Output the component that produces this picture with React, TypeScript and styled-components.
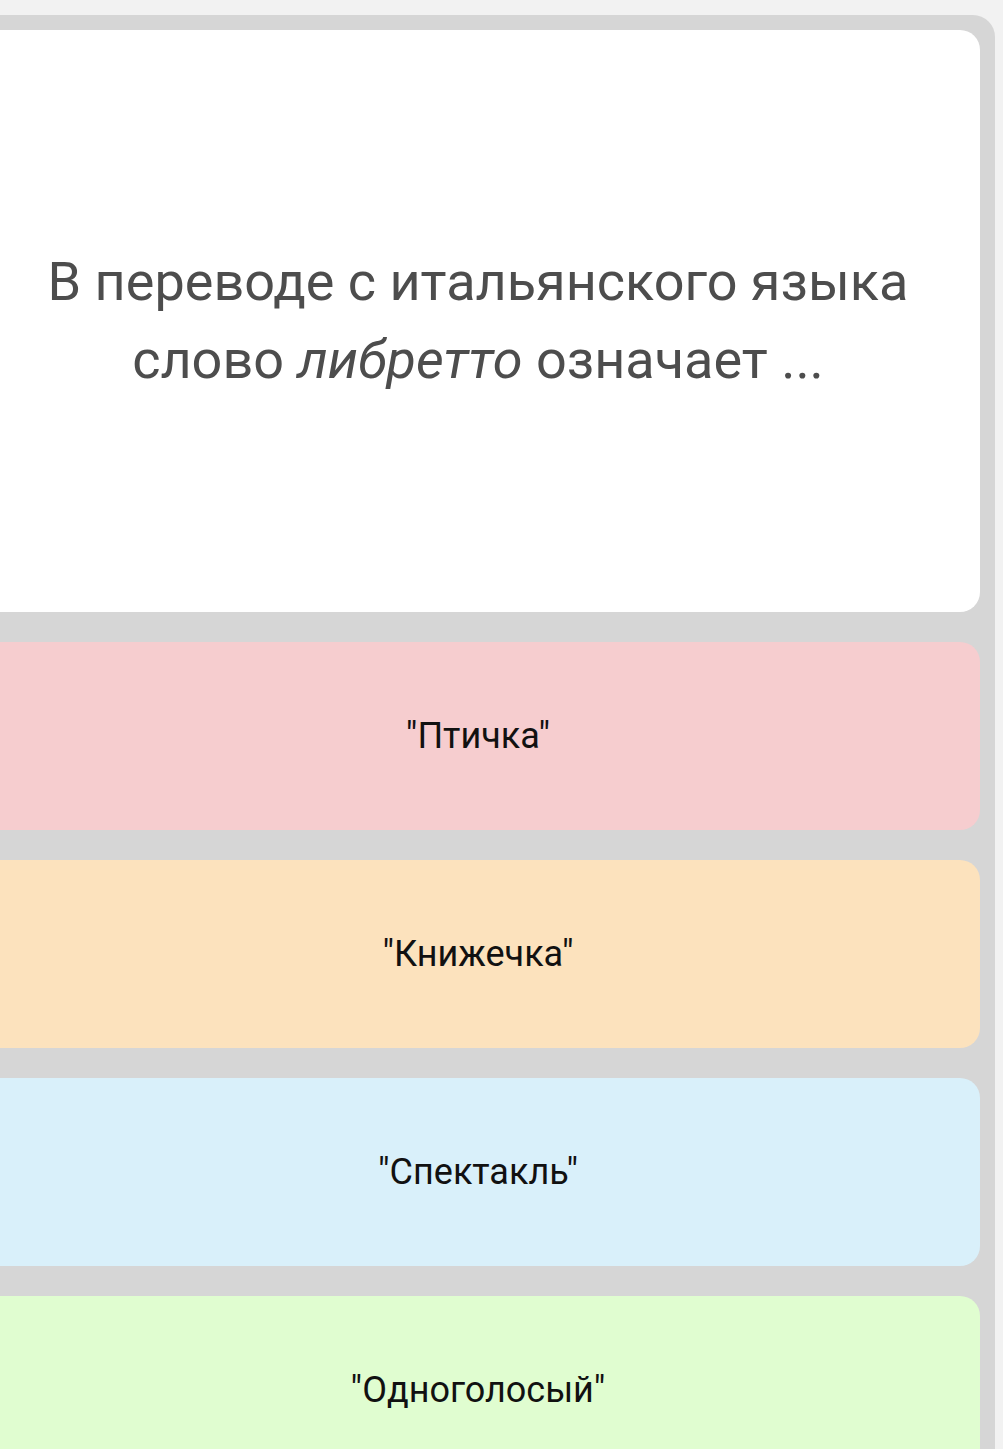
import styled, { createGlobalStyle } from 'styled-components';

const GlobalStyle = createGlobalStyle`
  html, body {
    margin: 0;
    padding: 0;
    background: #f2f2f2;
    overflow: hidden;
  }
  body {
    font-family: Roboto, 'Noto Sans', sans-serif;
  }
`;

const Board = styled.div`
  margin: 15px 0 0 -39px;
  width: 1034px;
  box-sizing: border-box;
  padding: 15px;
  background: #d6d6d6;
  border-radius: 22px 22px 0 0;
  display: flex;
  flex-direction: column;
  gap: 30px;
`;

const QuestionCard = styled.div`
  height: 582px;
  background: #ffffff;
  border-radius: 20px;
  display: flex;
  align-items: center;
  justify-content: center;
  padding: 0 40px;
  box-sizing: border-box;
`;

const QuestionText = styled.div`
  font-size: 54px;
  line-height: 78px;
  color: #4d4d4d;
  text-align: center;

  em {
    font-style: italic;
  }
`;

const AnswerCard = styled.div<{ $tone: string }>`
  height: 188px;
  background: ${(p) => p.$tone};
  border-radius: 20px;
  display: flex;
  align-items: center;
  justify-content: center;
  font-size: 36px;
  color: #111111;
`;

const answers = [
  { text: '"Птичка"', tone: '#f6cdcf' },
  { text: '"Книжечка"', tone: '#fce2bd' },
  { text: '"Спектакль"', tone: '#d9f0fa' },
  { text: '"Одноголосый"', tone: '#e0fdd0' },
];

const App = () => (
  <>
    <GlobalStyle />
    <Board>
      <QuestionCard>
        <QuestionText>
          В переводе с итальянского языка слово <em>либретто</em> означает ...
        </QuestionText>
      </QuestionCard>
      {answers.map((a) => (
        <AnswerCard key={a.text} $tone={a.tone}>
          {a.text}
        </AnswerCard>
      ))}
    </Board>
  </>
);

export default App;
